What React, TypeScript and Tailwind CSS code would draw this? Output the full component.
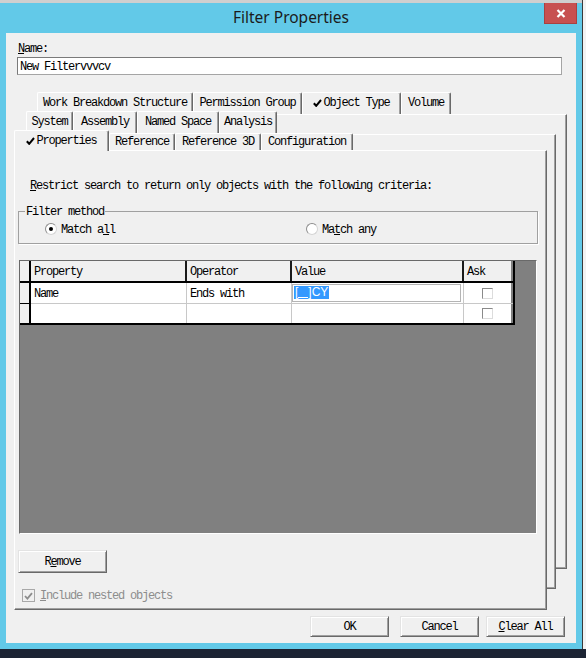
const mono =
  "font-['Liberation_Mono',monospace] text-[12px] leading-[12px] tracking-[-1.2px] pt-[1px] whitespace-pre";

const pageFrame =
  "bg-[#f0f0f0] border border-t-white border-l-white border-r-[#696969] border-b-[#696969] shadow-[inset_-1px_-1px_0_#a0a0a0]";

const button =
  "flex items-center justify-center bg-[#f0f0f0] border border-t-[#e3e3e3] border-l-[#e3e3e3] border-r-[#696969] border-b-[#696969] shadow-[inset_1px_1px_0_#fff,inset_-1px_-1px_0_#a0a0a0]";

function U({ c }: { c: string }) {
  return <span className="underline underline-offset-[1px]">{c}</span>;
}

function Tick() {
  return (
    <svg width="9" height="8" viewBox="0 0 9 8" className="mr-[1px] shrink-0">
      <path d="M0.8 4.2 L3.2 6.8 L8 1" fill="none" stroke="#000" strokeWidth="2" />
    </svg>
  );
}

type TabProps = {
  label: string;
  w: string;
  h: string;
  pad: string;
  checked?: boolean;
  active?: boolean;
};

function Tab({ label, w, h, pad, checked, active }: TabProps) {
  return (
    <div
      className={`${w} ${h} ${pad} ${active ? '-mb-[1px]' : ''} flex justify-center items-start bg-[#f0f0f0] border-t border-l border-r border-t-white border-l-white border-r-[#696969] shadow-[inset_-1px_0_0_#a0a0a0] rounded-tl-[2px] rounded-tr-[2px]`}
    >
      <span className={`${mono} text-black flex items-center`}>
        {checked && <Tick />}
        {label}
      </span>
    </div>
  );
}

function Radio({ on }: { on?: boolean }) {
  return (
    <span className="w-[12px] h-[12px] rounded-full bg-white border border-[#8d8d8d] border-b-[#d4d4d4] border-r-[#d4d4d4] flex items-center justify-center">
      {on && <span className="w-[4px] h-[4px] rounded-full bg-black" />}
    </span>
  );
}

function AskBox() {
  return (
    <span className="w-[11px] h-[11px] bg-white border border-[#8a8a8a] border-b-[#dcdcdc] border-r-[#dcdcdc]" />
  );
}

function CriteriaGrid() {
  const head = 'h-full bg-[#f0f0f0] border-r-2 border-[#1a1a1a] pl-[3px] flex items-center';
  const cell = 'h-full bg-white border-r border-[#c8c8c8] pl-[3px] flex items-center';
  return (
    <div className="ml-[1px] w-[518px] h-[274px] bg-[#808080] border border-t-[#696969] border-l-[#696969] border-b-white border-r-white">
      <div className="w-[495px] border-r-2 border-black text-black">
        <div className="flex h-[22px] border-b-2 border-black">
          <div className="w-[11px] h-full bg-[#f0f0f0] border-r-2 border-black" />
          <div className={`w-[156px] ${head}`}>
            <span className={mono}>Property</span>
          </div>
          <div className={`w-[105px] ${head}`}>
            <span className={mono}>Operator</span>
          </div>
          <div className={`w-[172px] ${head}`}>
            <span className={mono}>Value</span>
          </div>
          <div className="w-[47px] h-full bg-[#f0f0f0] pl-[3px] flex items-center">
            <span className={mono}>Ask</span>
          </div>
        </div>

        <div className="flex h-[21px] border-b border-[#c8c8c8]">
          <div className="w-[11px] h-[21px] -mb-[1px] bg-[#f0f0f0] border-r-2 border-b border-black" />
          <div className={`w-[156px] ${cell}`}>
            <span className={mono}>Name</span>
          </div>
          <div className={`w-[105px] ${cell}`}>
            <span className={mono}>Ends with</span>
          </div>
          <div className="w-[172px] h-full bg-white border-r border-[#c8c8c8] pt-[1px]">
            <div className="w-[169px] h-[18px] border border-[#b4b4b4] bg-white pl-[1px] pt-[1px] flex items-start">
              <span className="flex items-end h-[13px] bg-[#3399ff] text-white font-['Liberation_Sans',sans-serif] text-[12px] leading-[13px] px-[1px] whitespace-pre">
                [<span className="w-[10px] h-[11px] mb-[1px] border-b border-white" />]CY
              </span>
            </div>
          </div>
          <div className="w-[47px] h-full bg-white flex items-center justify-center">
            <AskBox />
          </div>
        </div>

        <div className="flex h-[21px] border-b-2 border-black">
          <div className="w-[11px] h-full bg-[#f0f0f0] border-r-2 border-black" />
          <div className={`w-[156px] ${cell}`} />
          <div className={`w-[105px] ${cell}`} />
          <div className={`w-[172px] ${cell}`} />
          <div className="w-[47px] h-full bg-white flex items-center justify-center">
            <AskBox />
          </div>
        </div>
      </div>
    </div>
  );
}

function PropertiesPage() {
  return (
    <div className={`relative w-[533px] h-[460px] ${pageFrame} flex flex-col pl-[3px] text-black`}>
      <div className={`${mono} ml-[12px] mt-[28px] h-[12px]`}>
        <U c="R" />
        estrict search to return only objects with the following criteria:
      </div>

      <fieldset className="mt-[14px] w-[520px] h-[39px] border border-[#a0a0a0] shadow-[1px_1px_0_#fff]">
        <legend className={`${mono} ml-[6px] px-[1px]`}>Filter method</legend>
        <div className="flex items-center h-[12px] mt-[5px] ml-[26px]">
          <label className="w-[261px] flex items-center gap-[4px]">
            <Radio on />
            <span className={mono}>
              Match a<U c="l" />l
            </span>
          </label>
          <label className="flex items-center gap-[4px]">
            <Radio />
            <span className={mono}>
              Ma<U c="t" />ch any
            </span>
          </label>
        </div>
      </fieldset>

      <div className="mt-[16px]">
        <CriteriaGrid />
      </div>

      <div className={`mt-[16px] w-[89px] h-[23px] ${button}`}>
        <span className={mono}>
          R<U c="e" />move
        </span>
      </div>

      <div className="mt-[16px] ml-[4px] flex items-center h-[13px] gap-[5px]">
        <span className="w-[13px] h-[13px] bg-[#f0f0f0] border border-[#a8a8a8] flex items-center justify-center">
          <svg width="9" height="8" viewBox="0 0 9 8">
            <path d="M1 4 L3.4 6.6 L8 1.2" fill="none" stroke="#8d8d8d" strokeWidth="1.8" />
          </svg>
        </span>
        <span className={`${mono} text-[#8d8d8d]`}>
          <U c="I" />
          nclude nested objects
        </span>
      </div>
    </div>
  );
}

function TabControl() {
  return (
    <div className="relative w-[553px] h-[518px] ml-[8px] mt-[17px]">
      <div className={`absolute left-[22px] top-[22px] w-[531px] h-[455px] ${pageFrame}`} />
      <div className="relative flex h-[22px] ml-[23px]">
        <Tab label="Work Breakdown Structure" w="w-[156px]" h="h-[22px]" pad="pt-[3px]" />
        <Tab label="Permission Group" w="w-[109px]" h="h-[22px]" pad="pt-[3px]" />
        <Tab label="Object Type" w="w-[99px]" h="h-[22px]" pad="pt-[3px]" checked />
        <Tab label="Volume" w="w-[50px]" h="h-[22px]" pad="pt-[3px]" />
      </div>

      <div className={`absolute left-[11px] top-[42px] w-[531px] h-[455px] ${pageFrame}`} />
      <div className="relative flex h-[23px] -mt-[3px] ml-[12px]">
        <Tab label="System" w="w-[47px]" h="h-[23px]" pad="pt-[3px]" />
        <Tab label="Assembly" w="w-[64px]" h="h-[23px]" pad="pt-[3px]" />
        <Tab label="Named Space" w="w-[82px]" h="h-[23px]" pad="pt-[3px]" />
        <Tab label="Analysis" w="w-[58px]" h="h-[23px]" pad="pt-[3px]" />
      </div>

      <div className="relative z-10 flex items-end h-[20px] -mt-[4px]">
        <Tab label="Properties" w="w-[95px]" h="h-[21px]" pad="pt-[3px]" checked active />
        <Tab label="Reference" w="w-[66px]" h="h-[17px]" pad="pt-[1px]" />
        <Tab label="Reference 3D" w="w-[86px]" h="h-[17px]" pad="pt-[1px]" />
        <Tab label="Configuration" w="w-[92px]" h="h-[17px]" pad="pt-[1px]" />
      </div>

      <PropertiesPage />
    </div>
  );
}

export default function App() {
  return (
    <div className="w-[586px] h-[658px] overflow-hidden bg-[#1c2434] flex flex-col">
      <div className="flex h-[649px]">
        <div className="w-[582px] flex flex-col">
          <div className="h-[3px] bg-[#cfcfcf]" />
          <div className="flex-1 bg-[#62c9e8] flex flex-col">
            {/* caption bar */}
            <div className="h-[30px] flex items-start">
              <div className="w-[38px]" />
              <div className="flex-1 h-[29px] flex items-center justify-center font-['Noto_Sans',sans-serif] text-[15.5px] text-[#1b1b1b]">
                Filter Properties
              </div>
              <div className="w-[33px] h-[21px] mr-[5px] bg-[#c75050] border border-[#a94040] border-t-0 flex items-center justify-center">
                <svg width="10" height="9" viewBox="0 0 10 9">
                  <path d="M1.5 1 L8.5 8 M8.5 1 L1.5 8" stroke="#fff" strokeWidth="2.2" />
                </svg>
              </div>
            </div>

            <div className="mx-[6px] mb-[6px] flex-1 bg-[#f0f0f0] flex flex-col text-black">
              <div className={`${mono} mt-[9px] ml-[12px] h-[12px]`}>
                <U c="N" />
                ame:
              </div>
              <div className="mt-[3px] ml-[11px] w-[545px] h-[18px] bg-white border border-[#a5a5a5] border-t-[#7a7a7a] border-l-[#7a7a7a] flex items-center pl-[2px]">
                <span className={mono}>New Filtervvvcv</span>
              </div>

              <TabControl />

              <div className="mt-[6px] ml-[304px] flex">
                <div className={`w-[79px] h-[21px] ${button}`}>
                  <span className={mono}>OK</span>
                </div>
                <div className={`ml-[11px] w-[79px] h-[21px] ${button}`}>
                  <span className={mono}>Cancel</span>
                </div>
                <div className={`ml-[7px] w-[79px] h-[21px] ${button}`}>
                  <span className={mono}>
                    <U c="C" />
                    lear All
                  </span>
                </div>
              </div>
            </div>
          </div>
        </div>
        <div className="w-[4px] bg-[#f2f2f2] border-l border-[#3a3a3a]" />
      </div>
    </div>
  );
}
